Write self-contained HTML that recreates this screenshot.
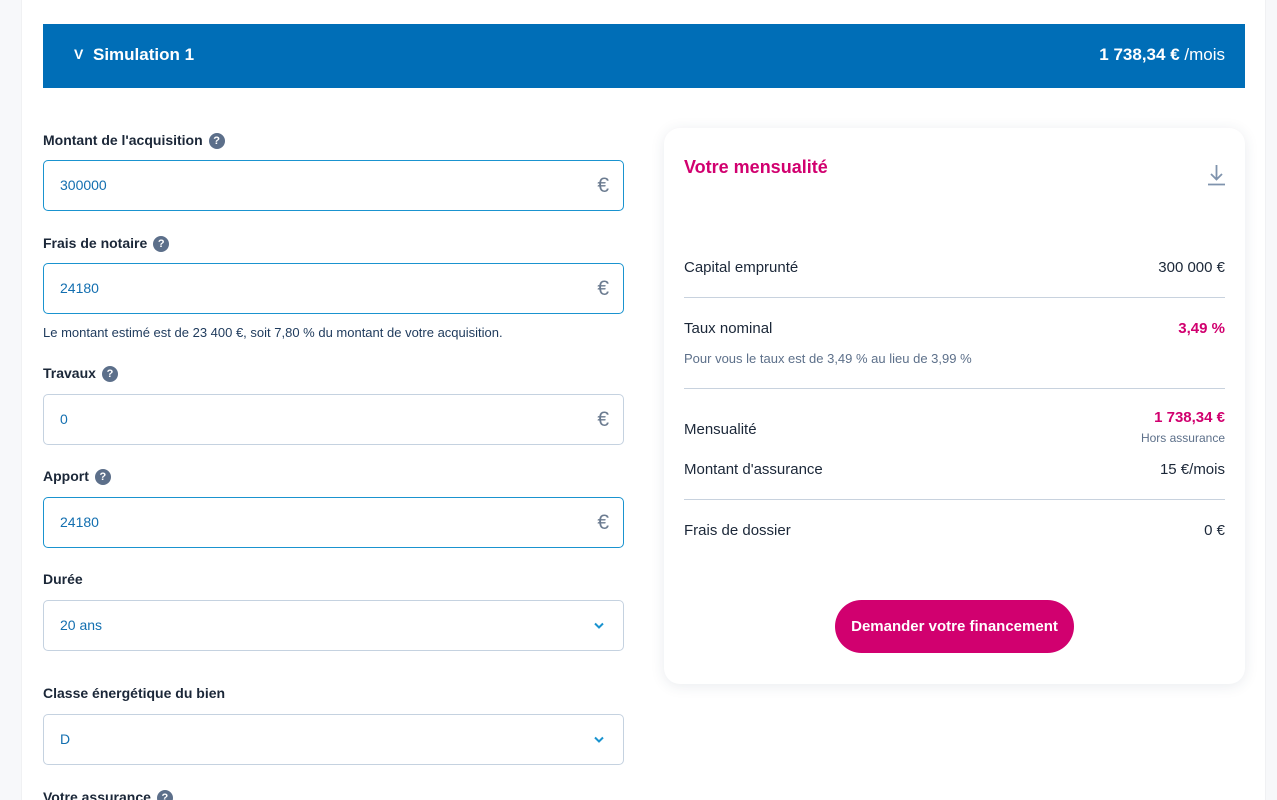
<!DOCTYPE html>
<html><head><meta charset="utf-8"><style>
*{box-sizing:border-box;margin:0;padding:0}
html,body{width:1277px;height:800px;overflow:hidden}
body{background:#f7f8fa;font-family:"Liberation Sans",sans-serif;position:relative;color:#1b2738}
.page{position:absolute;left:21px;top:0;width:1245px;height:800px;background:#fff;border-left:1px solid #f0f1f3;border-right:1px solid #f0f1f3}
.a{position:absolute}
.bar{left:43px;top:24px;width:1202px;height:64px;background:#006eb7;color:#fff;font-weight:bold}
.lbl{font-size:14px;font-weight:bold;color:#1b2738;left:43px}
.q{display:inline-block;width:16px;height:16px;border-radius:50%;background:#5c6f8a;color:#fff;font-size:11px;text-align:center;line-height:16px;margin-left:6px;vertical-align:1px}
.in{left:43px;width:581px;height:51px;border:1px solid #c5d2e0;border-radius:5px;color:#136fb0;font-size:14px;padding-left:16px;line-height:49px}
.in.f{border-color:#1a93cf}
.eur{position:absolute;right:14px;top:0;font-size:21px;color:#6b7b90}
.chev{position:absolute;right:19px;top:21px}
.card{left:664px;top:128px;width:581px;height:556px;background:#fff;border-radius:16px;box-shadow:0 2px 14px rgba(40,60,90,.10)}
.row{left:684px;width:541px;font-size:15px;color:#1b2738}
.row .r{position:absolute;right:0;top:0}
.hr{left:684px;width:541px;height:1px;background:#c8d2de}
.pink{color:#d1006f;font-weight:bold}
</style></head><body>
<div class="page"></div>
<div class="a bar"><span class="a" style="left:31px;top:22px;font-size:14px">V</span><span class="a" style="left:50px;top:21px;font-size:17px">Simulation 1</span><span class="a" style="right:20px;top:21px;font-size:17px">1 738,34 € <span style="font-weight:normal">/mois</span></span></div>

<div class="a lbl" style="top:132px">Montant de l'acquisition<span class="q">?</span></div>
<div class="a in f" style="top:160px">300000<span class="eur">€</span></div>
<div class="a lbl" style="top:235px">Frais de notaire<span class="q">?</span></div>
<div class="a in f" style="top:263px">24180<span class="eur">€</span></div>
<div class="a" style="left:43px;top:325px;font-size:13px;color:#1e3a5c">Le montant estimé est de 23 400 €, soit 7,80 % du montant de votre acquisition.</div>
<div class="a lbl" style="top:365px">Travaux<span class="q">?</span></div>
<div class="a in" style="top:394px">0<span class="eur">€</span></div>
<div class="a lbl" style="top:468px">Apport<span class="q">?</span></div>
<div class="a in f" style="top:497px">24180<span class="eur">€</span></div>
<div class="a lbl" style="top:571px">Durée</div>
<div class="a in" style="top:600px">20 ans<svg class="chev" width="10" height="7" viewBox="0 0 10 7"><path d="M1 1.5l4 4 4-4" stroke="#1a93cf" stroke-width="2" fill="none"/></svg></div>
<div class="a lbl" style="top:685px">Classe énergétique du bien</div>
<div class="a in" style="top:714px">D<svg class="chev" width="10" height="7" viewBox="0 0 10 7"><path d="M1 1.5l4 4 4-4" stroke="#1a93cf" stroke-width="2" fill="none"/></svg></div>
<div class="a lbl" style="top:789px">Votre assurance<span class="q">?</span></div>

<div class="a card"></div>
<div class="a pink" style="left:684px;top:157px;font-size:18px">Votre mensualité</div>
<svg class="a" style="left:1207px;top:164px" width="19" height="22" viewBox="0 0 19 22"><path d="M9.5 1v14M4 10l5.5 5.5L15 10M1 20.5h17" stroke="#7f93ad" stroke-width="1.8" fill="none"/></svg>
<div class="a row" style="top:259px">Capital emprunté<span class="r">300 000 €</span></div>
<div class="a hr" style="top:297px"></div>
<div class="a row" style="top:320px">Taux nominal<span class="r pink">3,49 %</span></div>
<div class="a" style="left:684px;top:351px;font-size:13px;color:#5d708a">Pour vous le taux est de 3,49 % au lieu de 3,99 %</div>
<div class="a hr" style="top:388px"></div>
<div class="a row" style="top:421px">Mensualité</div>
<div class="a pink" style="right:52px;top:409px;font-size:15px">1 738,34 €</div>
<div class="a" style="right:52px;top:431px;font-size:12px;color:#5d708a">Hors assurance</div>
<div class="a row" style="top:461px">Montant d'assurance<span class="r">15 €/mois</span></div>
<div class="a hr" style="top:499px"></div>
<div class="a row" style="top:522px">Frais de dossier<span class="r">0 €</span></div>
<div class="a" style="left:835px;top:600px;width:239px;height:53px;border-radius:27px;background:#d1006f;color:#fff;font-size:15px;font-weight:bold;text-align:center;line-height:53px">Demander votre financement</div>
</body></html>
